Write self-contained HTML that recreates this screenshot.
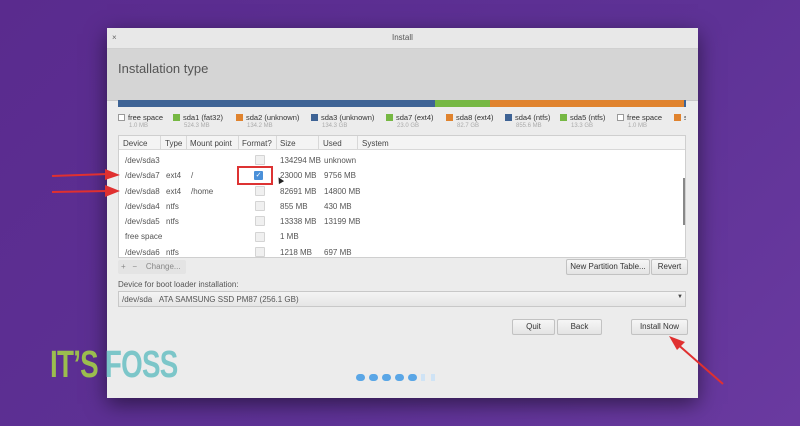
<!DOCTYPE html>
<html><head><style>
body{margin:0;width:800px;height:426px;overflow:hidden;background:linear-gradient(135deg,#5a2b8e,#5e3296 60%,#6a3aa0);font-family:"Liberation Sans","DejaVu Sans",sans-serif;position:relative}
.a{position:absolute}
.win{left:107px;top:28px;width:591px;height:370px;background:#ececec;box-shadow:0 6px 20px rgba(0,0,0,.5)}
.t{font-size:8px;color:#444;white-space:nowrap}
.btn{position:absolute;background:linear-gradient(#f6f6f6,#e4e4e4);border:1px solid #c2c2c2;border-radius:2px;font-size:8px;color:#333;text-align:center;line-height:14px;height:14px}
.cb{position:absolute;width:8px;height:8px;border:1px solid #d4d4d4;background:#f0f0f0;border-radius:1px;left:255px}
.sq{display:inline-block;width:7px;height:7px;margin-right:3px;vertical-align:-1px}
.lg{position:absolute;top:113px;font-size:7.5px;color:#333;white-space:nowrap}
.lg small{display:block;color:#aaa;font-size:6px;margin-left:11px;margin-top:1px}
</style></head><body>
<div class="a win">
 <div class="a" style="left:0;top:0;width:591px;height:20px;background:#e8e8e8;border-bottom:1px solid #d0d0d0"></div>
 <div class="a t" style="left:5px;top:5px;color:#666">×</div>
 <div class="a t" style="left:285px;top:5px;color:#555">Install</div>
 <div class="a" style="left:0;top:21px;width:591px;height:51px;background:#d5d5d5;border-bottom:1px solid #c8c8c8"></div>
 <div class="a" style="left:11px;top:33px;font-size:13px;color:#555">Installation type</div>
</div>
<div class="a" style="left:118px;top:100px;width:568px;height:7px;background:#3e6395"></div>
<div class="a" style="left:435px;top:100px;width:55px;height:7px;background:#76b843"></div>
<div class="a" style="left:490px;top:100px;width:194px;height:7px;background:#e0832e"></div>
<div class="lg" style="left:118px"><span class="sq" style="border:1px solid #999;width:5px;height:5px;background:#fff"></span>free space<small>1.0 MB</small></div>
<div class="lg" style="left:173px"><span class="sq" style="background:#76b843"></span>sda1 (fat32)<small>524.3 MB</small></div>
<div class="lg" style="left:236px"><span class="sq" style="background:#e0832e"></span>sda2 (unknown)<small>134.2 MB</small></div>
<div class="lg" style="left:311px"><span class="sq" style="background:#3e6395"></span>sda3 (unknown)<small>134.3 GB</small></div>
<div class="lg" style="left:386px"><span class="sq" style="background:#76b843"></span>sda7 (ext4)<small>23.0 GB</small></div>
<div class="lg" style="left:446px"><span class="sq" style="background:#e0832e"></span>sda8 (ext4)<small>82.7 GB</small></div>
<div class="lg" style="left:505px"><span class="sq" style="background:#3e6395"></span>sda4 (ntfs)<small>855.6 MB</small></div>
<div class="lg" style="left:560px"><span class="sq" style="background:#76b843"></span>sda5 (ntfs)<small>13.3 GB</small></div>
<div class="lg" style="left:617px"><span class="sq" style="border:1px solid #999;width:5px;height:5px;background:#fff"></span>free space<small>1.0 MB</small></div>
<div class="lg" style="left:674px;width:12px;overflow:hidden"><span class="sq" style="background:#e0832e"></span>s</div>
<div class="a" style="left:118px;top:135px;width:568px;height:123px;background:#fff;border:1px solid #cfcfcf;box-sizing:border-box"></div>
<div class="a" style="left:119px;top:136px;width:566px;height:13px;background:#f4f4f4;border-bottom:1px solid #d8d8d8"></div>
<div class="a t" style="left:123px;top:139px">Device</div>
<div class="a" style="left:160px;top:136px;width:1px;height:13px;background:#d8d8d8"></div>
<div class="a t" style="left:165px;top:139px">Type</div>
<div class="a" style="left:186px;top:136px;width:1px;height:13px;background:#d8d8d8"></div>
<div class="a t" style="left:190px;top:139px">Mount point</div>
<div class="a" style="left:238px;top:136px;width:1px;height:13px;background:#d8d8d8"></div>
<div class="a t" style="left:242px;top:139px">Format?</div>
<div class="a" style="left:276px;top:136px;width:1px;height:13px;background:#d8d8d8"></div>
<div class="a t" style="left:280px;top:139px">Size</div>
<div class="a" style="left:318px;top:136px;width:1px;height:13px;background:#d8d8d8"></div>
<div class="a t" style="left:323px;top:139px">Used</div>
<div class="a" style="left:357px;top:136px;width:1px;height:13px;background:#d8d8d8"></div>
<div class="a t" style="left:362px;top:139px">System</div>
<div class="a" style="left:683px;top:178px;width:2px;height:47px;background:#888"></div>
<div class="a t" style="left:125px;top:153px;line-height:15.3px;color:#555">/dev/sda3<br>/dev/sda7<br>/dev/sda8<br>/dev/sda4<br>/dev/sda5<br>free space<br>/dev/sda6</div>
<div class="a t" style="left:166px;top:153px;line-height:15.3px;color:#555"><br>ext4<br>ext4<br>ntfs<br>ntfs<br><br>ntfs</div>
<div class="a t" style="left:191px;top:153px;line-height:15.3px;color:#555"><br>/<br>/home</div>
<div class="a t" style="left:280px;top:153px;line-height:15.3px;color:#555">134294 MB<br>23000 MB<br>82691 MB<br>855 MB<br>13338 MB<br>1 MB<br>1218 MB</div>
<div class="a t" style="left:324px;top:153px;line-height:15.3px;color:#555">unknown<br>9756 MB<br>14800 MB<br>430 MB<br>13199 MB<br><br>697 MB</div>
<div class="cb" style="top:155px"></div>
<div class="cb" style="top:186px"></div>
<div class="cb" style="top:201px"></div>
<div class="cb" style="top:216px"></div>
<div class="cb" style="top:232px"></div>
<div class="cb" style="top:247px"></div>
<div class="a" style="left:254px;top:171px;width:9px;height:9px;background:#4a90d9;border-radius:1px;color:#fff;font-size:7px;line-height:9px;text-align:center">✓</div>
<div class="a" style="left:237px;top:166px;width:36px;height:19px;border:2px solid #d33;box-sizing:border-box"></div>
<div class="a" style="left:277px;top:177px;width:0;height:0;border-left:3px solid transparent;border-right:3px solid transparent;border-bottom:6px solid #222;transform:rotate(-30deg)"></div>
<svg class="a" style="left:50px;top:168px" width="70" height="30"><path d="M2 8 L58 6" stroke="#e03030" stroke-width="2"/><path d="M55 1 L70 7 L55 12Z" fill="#e03030"/><path d="M2 24 L58 23" stroke="#e03030" stroke-width="2"/><path d="M55 17 L70 23 L55 29Z" fill="#e03030"/></svg>
<div class="a" style="left:118px;top:260px;width:68px;height:14px;background:#e4e4e4;border-radius:2px"></div>
<div class="a t" style="left:121px;top:262px;color:#888">+&nbsp;&nbsp; −&nbsp;&nbsp;&nbsp; Change...</div>
<div class="btn" style="left:566px;top:259px;width:82px">New Partition Table...</div>
<div class="btn" style="left:651px;top:259px;width:35px">Revert</div>
<div class="a t" style="left:118px;top:280px;color:#555">Device for boot loader installation:</div>
<div class="a" style="left:118px;top:291px;width:568px;height:16px;background:linear-gradient(#f4f4f4,#e6e6e6);border:1px solid #c8c8c8;box-sizing:border-box"></div>
<div class="a t" style="left:122px;top:295px;color:#555">/dev/sda &nbsp;&nbsp;ATA SAMSUNG SSD PM87 (256.1 GB)</div>
<div class="a t" style="left:677px;top:294px;font-size:6px;color:#444">▼</div>
<div class="btn" style="left:512px;top:319px;width:41px">Quit</div>
<div class="btn" style="left:557px;top:319px;width:43px">Back</div>
<div class="btn" style="left:631px;top:319px;width:55px">Install Now</div>
<svg class="a" style="left:665px;top:334px" width="62" height="52"><path d="M58 50 L10 8" stroke="#e03030" stroke-width="2"/><path d="M4 2 L20 8 L12 16Z" fill="#e03030"/></svg>
<div class="a" style="left:356px;top:368px;white-space:nowrap">
<span style="display:inline-block;width:9px;height:7px;border-radius:4px;background:#5aa6e6;margin-right:4px"></span><span style="display:inline-block;width:9px;height:7px;border-radius:4px;background:#5aa6e6;margin-right:4px"></span><span style="display:inline-block;width:9px;height:7px;border-radius:4px;background:#5aa6e6;margin-right:4px"></span><span style="display:inline-block;width:9px;height:7px;border-radius:4px;background:#5aa6e6;margin-right:4px"></span><span style="display:inline-block;width:9px;height:7px;border-radius:4px;background:#5aa6e6;margin-right:4px"></span><span style="display:inline-block;width:4px;height:7px;background:#cfe3f5;margin-right:6px"></span><span style="display:inline-block;width:4px;height:7px;background:#cfe3f5"></span></div>
<div class="a" style="left:50px;top:345px;font-size:38px;font-weight:bold;letter-spacing:-1px;transform:scaleX(0.73);transform-origin:left;white-space:nowrap;line-height:40px"><span style="color:#9bbd4e">IT’S</span> <span style="color:#7cc6c9">FOSS</span></div>
</body></html>
